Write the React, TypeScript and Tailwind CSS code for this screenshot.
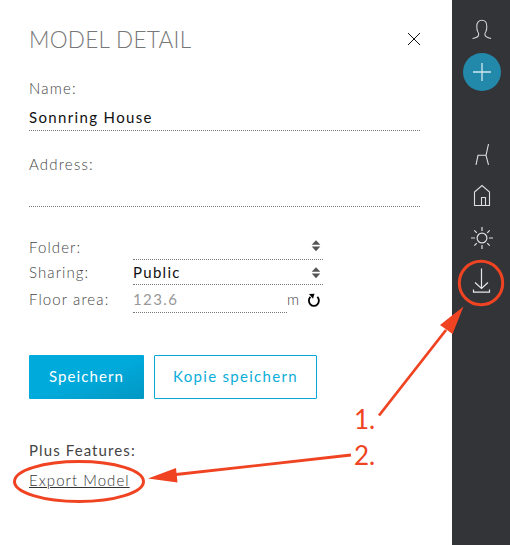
import React from "react";

const Sorter = () => (
  <svg width="10" height="12" viewBox="0 0 10 12" className="mr-[2px] shrink-0" fill="#555">
    <path d="M5 0.3 9.3 4.8H.7ZM5 11.3 9.3 6.6H.7Z" />
  </svg>
);

const Rail = () => (
  <aside className="relative flex w-[58px] flex-col items-center bg-[#333438] pl-[2px]">
    <svg width="22" height="22" viewBox="0 0 22 22" className="mt-[19px] shrink-0" fill="none" stroke="#d2d3d5" strokeWidth="1.1">
      <path d="M1.500 19.500C5 18.800 7.800 18.300 7.700 15.600c0-1.500-.3-2.100-1-3.100C6 11.300 5.800 9.300 5.800 7.300 5.800 3.500 7.800 1.300 10.800 1.300s5 2.200 5 6c0 2-.2 4-.9 5.200-.7 1-1 1.600-1 3.100 0 2.400 2.600 3.200 6.200 3.900" />
    </svg>
    <button className="mt-[12px] flex size-[38px] shrink-0 items-center justify-center rounded-full bg-[#2389ab]">
      <svg width="18" height="18" viewBox="0 0 18 18" stroke="#cfe6ef" strokeWidth="1.3">
        <path d="M9 0v18M0 9h18" />
      </svg>
    </button>
    <svg width="22" height="24" viewBox="0 0 22 24" className="mt-[52px] shrink-0" fill="none" stroke="#e0e0e2" strokeWidth="1.1">
      <path d="M17.500 1 15 12.300H7L5 21.800M15 12.300 17.500 21.800" />
    </svg>
    <svg width="22" height="24" viewBox="0 0 22 24" className="mt-[17px] shrink-0" fill="none" stroke="#dedee0" strokeWidth="1.1">
      <path d="M3.500 21.500V8L11 1.500 18.500 8V21.500ZM10.500 21.500v-8h4v8" />
    </svg>
    <svg width="24" height="24" viewBox="0 0 24 24" className="mt-[18px] shrink-0" fill="none" stroke="#dedee0" strokeWidth="1.200">
      <circle cx="12" cy="12" r="4.900" />
      <path d="M12 1v4M12 19v4M1 12h4M19 12h4M4.300 4.300l2.500 2.500M17.200 17.200l2.500 2.500M4.300 19.700l2.500-2.500M17.200 6.800l2.500-2.500" />
    </svg>
    <svg width="20" height="26" viewBox="0 0 20 26" className="mt-[18px] shrink-0" fill="none" stroke="#e6e6e8" strokeWidth="1.200">
      <path d="M9.500 .5V20.500M3 14.500l6.500 6 6.500-6M1.500 21.500v2.700h16v-2.700" />
    </svg>
  </aside>
);

const label = "h-5 w-[104px] shrink-0 whitespace-nowrap leading-5 font-light tracking-[1.1px] text-[#444]";
const value = "flex h-[23px] w-[190px] justify-between border-b border-dotted border-[#777] leading-5 tracking-[1.3px] text-[#111]";

export default function App() {
  return (
    <div className="relative flex h-[545px] w-[510px] overflow-hidden bg-white font-['Lato',sans-serif] text-[15px]">
      <main className="flex w-[452px] flex-col pt-[26px] pr-8 pl-[29px]">
        <header className="flex h-7 items-center justify-between">
          <h1 className="text-[22.5px] leading-7 font-light tracking-[0.3px] whitespace-nowrap text-[#777]">MODEL DETAIL</h1>
          <svg width="12" height="12" viewBox="0 0 12 12" className="mb-[2px]" stroke="#111" strokeWidth="1">
            <path d="M0 0 12 12M12 0 0 12" />
          </svg>
        </header>

        <label className="mt-[24px] h-5 leading-5 font-light tracking-[1.2px] text-[#444]">Name:</label>
        <div className="mt-[9px] h-6 border-b border-dotted border-[#777] leading-5 tracking-[1.35px] text-[#111]">Sonnring House</div>
        <label className="mt-[23px] h-5 leading-5 font-light tracking-[1.2px] text-[#444]">Address:</label>
        <div className="mt-[9px] h-6 border-b border-dotted border-[#777]" />

        <div className="mt-[30px] flex">
          <span className={label}>Folder:</span>
          <div className={value}>
            <span />
            <span className="pt-[3px]"><Sorter /></span>
          </div>
        </div>
        <div className="mt-[2px] flex">
          <span className={label}>Sharing:</span>
          <div className={value}>
            <span>Public</span>
            <span className="pt-[5px]"><Sorter /></span>
          </div>
        </div>
        <div className="mt-[4px] flex h-6">
          <span className={label}>Floor area:</span>
          <div className="w-[154px] border-b border-dotted border-[#777] leading-5 tracking-[1.4px] text-[#999]">123.6</div>
          <span className="leading-5 font-light text-[#444]">m</span>
          <svg width="14" height="15" viewBox="0 0 14 15" className="mt-[4px] ml-[8px]" fill="none" stroke="#000" strokeWidth="1.800">
            <path d="M10.400 3.800A5 5.300 0 1 1 3.400 3.800" />
            <path d="M2 1 7.500 .8 6 5.800Z" fill="#000" stroke="none" />
          </svg>
        </div>

        <div className="mt-[42px] flex gap-[10px]">
          <button className="h-11 w-[115px] rounded-[1px] bg-linear-to-br from-[#00aadb] from-50% to-[#0397c3] pb-px tracking-[1.1px] text-white">Speichern</button>
          <button className="h-11 w-[163px] rounded-[1px] border border-[#06a9d5] pb-px tracking-[1.3px] whitespace-nowrap text-[#0baed8]">Kopie speichern</button>
        </div>

        <h2 className="mt-[41px] h-5 leading-5 tracking-[1.1px] text-[#444]">Plus Features:</h2>
        <a className="mt-[10px] h-5 self-start leading-5 font-light tracking-[1.05px] whitespace-nowrap text-[#333] underline underline-offset-1">Export Model</a>
      </main>
      <Rail />

      <svg className="absolute inset-0" width="510" height="545" viewBox="0 0 510 545" fill="none" stroke="#f04322" strokeWidth="3">
        <circle cx="481" cy="283" r="21.700" />
        <ellipse cx="79" cy="481.500" rx="64.500" ry="20" />
        <path d="M379 415.500 446 330M351 455 176 474.500" strokeWidth="2.800" />
        <path d="M463.500 306.500 440 325 452.500 334ZM148 478.500 176 468 177.500 482.500Z" fill="#f04322" stroke="none" />
      </svg>
      <div className="absolute top-[401px] left-[354px] font-['Lato',sans-serif] text-[26px] leading-[36px] text-[#f04322]">
        <div>1.</div>
        <div>2.</div>
      </div>
    </div>
  );
}
